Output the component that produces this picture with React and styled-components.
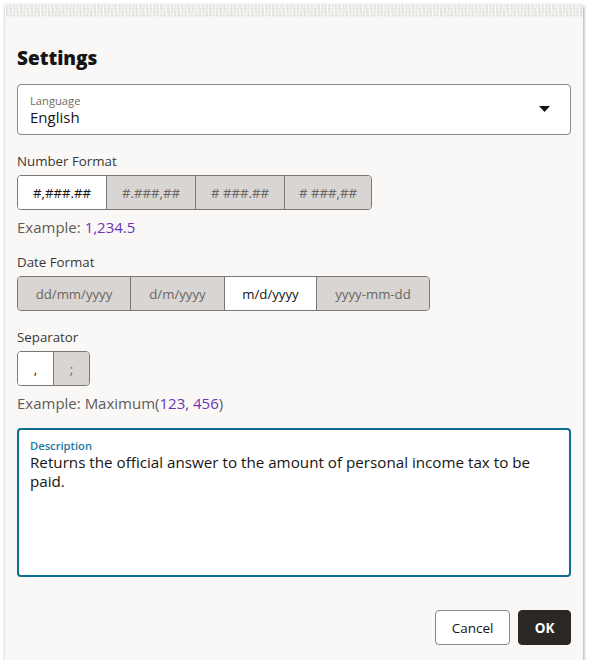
import React from "react";
import styled, { createGlobalStyle } from "styled-components";

const FONT = `"Open Sans", "Noto Sans", "Liberation Sans", sans-serif`;

const Global = createGlobalStyle`
  html, body { margin: 0; padding: 0; background: #ffffff; }
  body { font-family: ${FONT}; color: #161513; }
  * { box-sizing: border-box; }
`;

const Page = styled.div`
  padding: 4px 10px 0 5px;
`;

const Dialog = styled.div`
  width: 578px;
  height: 656px;
  background: #f9f8f6;
  box-shadow: 1px 2px 3px rgba(0, 0, 0, 0.35), -1px 0 2px rgba(0, 0, 0, 0.08);
  display: flex;
  flex-direction: column;
`;

const TornEdge = styled.div`
  height: 13px;
  background-color: #e4e2df;
  background-image:
    repeating-linear-gradient(90deg, rgba(255,255,255,0.75) 0 1px, transparent 1px 3px, rgba(255,255,255,0.35) 3px 5px, transparent 5px 7px),
    repeating-linear-gradient(73deg, rgba(255,255,255,0.45) 0 1px, transparent 1px 5px),
    repeating-linear-gradient(0deg, rgba(255,255,255,0.35) 0 1px, transparent 1px 3px);
`;

const Content = styled.div`
  flex: 1;
  display: flex;
  flex-direction: column;
  padding: 29px 12px 15px 12px;
`;

const Title = styled.h1`
  margin: 0 0 14px 0;
  font-size: 19px;
  line-height: 24px;
  font-weight: 800;
  color: #161513;
`;

const Select = styled.div`
  height: 51px;
  border: 1px solid #8b8985;
  border-radius: 4px;
  background: #ffffff;
  display: flex;
  align-items: center;
  padding: 0 20px 0 12px;
`;

const FieldText = styled.div`
  flex: 1;
  display: flex;
  flex-direction: column;
`;

const FloatLabel = styled.span`
  font-size: 11.2px;
  line-height: 15px;
  color: ${(p) => p.$color || "#6f6c69"};
  font-weight: ${(p) => (p.$color ? 600 : 400)};
`;

const FieldValue = styled.span`
  font-size: 15px;
  line-height: 19px;
  color: #161513;
`;

const Caret = styled.svg`
  width: 11px;
  height: 6px;
  margin-top: -2px;
`;

const Label = styled.div`
  font-size: 13.3px;
  line-height: 20px;
  color: #3a3835;
  margin: ${(p) => (p.$tight ? "15px" : "16px")} 0 4px 0;
`;

const Group = styled.div`
  display: flex;
  align-self: flex-start;
  border: 1px solid #7a7774;
  border-radius: 4px;
  overflow: hidden;
`;

const Segment = styled.button`
  width: ${(p) => p.$w}px;
  height: 33px;
  border: none;
  border-left: ${(p) => (p.$first ? "none" : "1px solid #7a7774")};
  background: ${(p) => (p.$active ? "#ffffff" : "#d8d5d2")};
  color: ${(p) => (p.$active ? "#161513" : "#6a6764")};
  font-family: ${FONT};
  font-size: 13.2px;
  padding: 0;
  display: flex;
  align-items: center;
  justify-content: center;
`;

const Example = styled.div`
  font-size: 15px;
  line-height: 20px;
  color: #5e5b58;
  margin-top: 7px;
`;

const Value = styled.span`
  color: #6a35b5;
`;

const TextArea = styled.div`
  margin-top: 15px;
  height: 149px;
  border: 2px solid #0e6e92;
  border-radius: 4px;
  background: #ffffff;
  padding: 8px 11px;
  display: flex;
  flex-direction: column;
`;

const AreaText = styled.div`
  font-size: 15.2px;
  line-height: 19px;
  color: #161513;
`;

const Footer = styled.div`
  margin-top: auto;
  display: flex;
  justify-content: flex-end;
  gap: 8px;
`;

const Button = styled.button`
  height: 35px;
  min-width: ${(p) => (p.$primary ? "53px" : "75px")};
  border-radius: 4px;
  border: 1px solid ${(p) => (p.$primary ? "#2b2724" : "#8b8985")};
  background: ${(p) => (p.$primary ? "#2b2724" : "#ffffff")};
  color: ${(p) => (p.$primary ? "#ffffff" : "#161513")};
  font-family: ${FONT};
  font-size: 13.5px;
  font-weight: ${(p) => (p.$primary ? 700 : 400)};
  padding: 0 12px;
`;

const numberFormats = [
  { t: "#,###.##", w: 88, active: true },
  { t: "#.###,##", w: 89 },
  { t: "# ###.##", w: 89 },
  { t: "# ###,##", w: 87 },
];
const dateFormats = [
  { t: "dd/mm/yyyy", w: 112 },
  { t: "d/m/yyyy", w: 94 },
  { t: "m/d/yyyy", w: 92, active: true },
  { t: "yyyy-mm-dd", w: 113 },
];
const separators = [
  { t: ",", w: 35, active: true },
  { t: ";", w: 36 },
];

function SegGroup({ items }) {
  return (
    <Group>
      {items.map((it, i) => (
        <Segment key={it.t} $w={it.w} $first={i === 0} $active={it.active}>
          {it.t}
        </Segment>
      ))}
    </Group>
  );
}

export default function App() {
  return (
    <>
      <Global />
      <Page>
        <Dialog>
          <TornEdge />
          <Content>
            <Title>Settings</Title>
            <Select>
              <FieldText>
                <FloatLabel>Language</FloatLabel>
                <FieldValue>English</FieldValue>
              </FieldText>
              <Caret viewBox="0 0 11 6">
                <path d="M0 0 H11 L5.5 6 Z" fill="#161513" />
              </Caret>
            </Select>
            <Label>Number Format</Label>
            <SegGroup items={numberFormats} />
            <Example>
              Example: <Value>1,234.5</Value>
            </Example>
            <Label $tight>Date Format</Label>
            <SegGroup items={dateFormats} />
            <Label>Separator</Label>
            <SegGroup items={separators} />
            <Example>
              Example: Maximum(<Value>123, 456</Value>)
            </Example>
            <TextArea>
              <FloatLabel $color="#1d7aa3">Description</FloatLabel>
              <AreaText>
                Returns the official answer to the amount of personal income tax to be paid.
              </AreaText>
            </TextArea>
            <Footer>
              <Button>Cancel</Button>
              <Button $primary>OK</Button>
            </Footer>
          </Content>
        </Dialog>
      </Page>
    </>
  );
}
